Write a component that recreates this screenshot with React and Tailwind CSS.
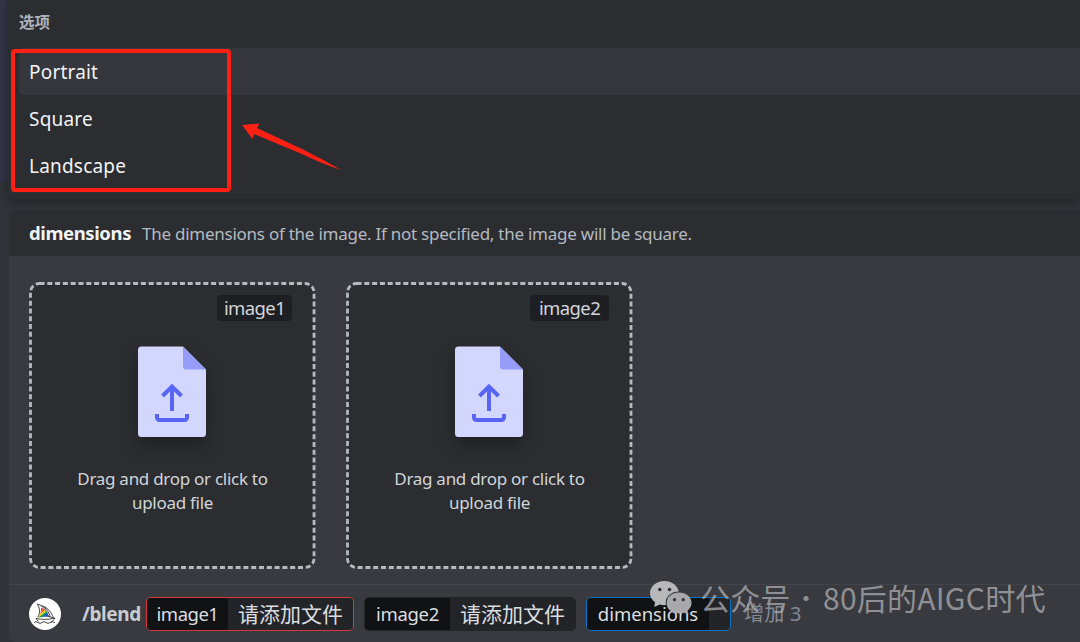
import { useId } from 'react';

const options = ['Portrait', 'Square', 'Landscape'];

const uploads = [
  { name: 'image1', width: 'w-[75px]' },
  { name: 'image2', width: 'w-[79px]' },
];

const FileIcon = () => (
  <svg width="68" height="91" viewBox="0 0 68 91" className="drop-shadow-[0_7px_8px_rgba(0,0,0,0.3)]">
    <path d="M3.500 0.5H45L68 23.500V87.500a3.500 3.500 0 0 1-3.500 3.500H3.500a3.500 3.500 0 0 1-3.500-3.500V4a3.500 3.500 0 0 1 3.500-3.500Z" fill="#d3d6fd" />
    <path d="M45 0.5L68 23.500H48a3 3 0 0 1-3-3Z" fill="#949cf7" />
    <path d="M34 65V41M24.500 50L34 40.500L43.500 50" fill="none" stroke="#5865f2" strokeWidth="4" />
    <path d="M19 68v3.500a2.500 2.500 0 0 0 2.500 2.500h25a2.500 2.500 0 0 0 2.500-2.500V68" fill="none" stroke="#5865f2" strokeWidth="4" />
  </svg>
);

const BoatIcon = () => {
  const clip = useId();
  return (
    <svg width="32" height="32" viewBox="0 0 32 32">
      <circle cx="16" cy="16" r="16" fill="#fff" />
      <clipPath id={clip}>
        <path d="M9 19.500C11.500 16 12.500 13.500 12 9.500C15.500 11 19 14 20 18.500C16 18.500 12.500 19 9 19.500Z" />
      </clipPath>
      <g fill="none" stroke="#333" strokeWidth="0.900">
        <path d="M8.300 6C13 7 17.500 12 18.800 18.200C15 17.300 11.500 18 8.800 19C11.500 15 11 10 8.300 6Z" />
        <path d="M12 7.500C18 9 22 13 24.500 20L19 18.300M15 8.800C18 12 20.500 15 21.200 19" />
        <path d="M7 20.500C12 21.500 20 22 26 20C24.500 22.500 23.500 23.500 22 24.200M7 20.500L9.500 23.500" />
        <path d="M5 24.500q2-1.800 4 0t4 0t4 0t4 0t5 0.200" />
      </g>
      <g clipPath={`url(#${clip})`} strokeWidth="2.200">
        <path d="M6 17L15.500 9" stroke="#e2283f" />
        <path d="M7 18.500L17 10" stroke="#f0602c" />
        <path d="M8 20L18 11.500" stroke="#f9d52b" />
        <path d="M9.500 21L19.500 12.800" stroke="#14a34b" />
        <path d="M11.500 21.500L20.500 14.200" stroke="#1c5fda" />
        <path d="M13.500 22.500L21.500 15.800" stroke="#5d38a8" />
      </g>
    </svg>
  );
};

const WeChatIcon = () => (
  <svg width="42" height="34" viewBox="0 0 42 34">
    <path d="M14.500 0C6.500 0 0 5.300 0 12.200C0 16 2 19 5.100 21.300L4.200 26L10 23.600C12 24.200 14 24.300 16 24.100C14.500 16.500 20 10.500 28.700 10.400C27.500 4.300 21.500 0 14.500 0Z" fill="#b8b8ba" />
    <path d="M29 11.500C22 11.500 16.500 16 16.500 22C16.500 28 22 32.500 29 32.500C30.800 32.500 32.500 32.200 34 31.600L38.500 33.500L37.500 29.700C40 27.800 41.500 25 41.500 22C41.500 16 36 11.500 29 11.500Z" fill="#a9a9ab" />
    <g fill="#303136">
      <circle cx="9.800" cy="8.500" r="1.800" />
      <circle cx="19.500" cy="8.500" r="1.800" />
      <circle cx="24.500" cy="18.700" r="1.600" />
      <circle cx="33.200" cy="18.700" r="1.600" />
    </g>
  </svg>
);

const UploadCard = ({ item }) => (
  <div className="relative flex h-[287px] w-[287px] flex-col items-center">
    <svg className="absolute inset-0" width="287" height="287">
      <rect x="1.500" y="1.500" width="283.500" height="284" rx="9" fill="#2b2d31" stroke="#b5bac1" strokeWidth="2.800" strokeDasharray="5 2.800" />
    </svg>
    <div className={`relative mt-[13px] mr-6 flex h-[26px] items-center justify-center self-end rounded bg-[#1e1f22] text-[18.500px] tracking-[-0.600px] text-[#d2d5da] ${item.width}`}>
      {item.name}
    </div>
    <div className="relative mt-[25px] mr-px">
      <FileIcon />
    </div>
    <p className="relative mt-[30px] text-center text-[17px] leading-6 tracking-[-0.280px] text-[#d2d5da]">
      Drag and drop or click to
      <br />
      upload file
    </p>
  </div>
);

const Argument = ({ name, value, frame, nameWidth }) => (
  <div className={`flex h-[34px] shrink-0 overflow-hidden rounded-[5px] border text-[18.500px] text-[#dbdee1] ${frame}`}>
    <span className={`flex items-center justify-center bg-[#111214] ${nameWidth}`}>{name}</span>
    <span className="flex flex-1 items-center justify-center bg-[#232428] text-[21px] leading-none tracking-normal">{value}</span>
  </div>
);

const App = () => {
  return (
    <div className="relative flex h-[642px] w-[1080px] flex-col overflow-hidden bg-[#313338] bg-linear-to-b from-[#33354a] from-[181px] to-[#313338] to-[181px] pl-[7px] font-['Noto_Sans','Noto_Sans_CJK_SC',sans-serif]">
      {/* Choices popup */}
      <div className="relative z-10 h-[199px] shrink-0 rounded-bl-lg bg-[#2b2d31] pl-3 shadow-[0_3px_12px_rgba(0,0,0,0.35)]">
        <div className="flex h-12 items-center pb-0.5 text-[15.500px] font-bold text-[#aeb3bb]">选项</div>
        {options.map((option, index) => (
          <div
            key={option}
            className={`flex h-[47px] items-center rounded-l pl-[10px] pt-0.5 text-[19px] tracking-[0.200px] text-[#f2f3f5] ${index === 0 ? 'bg-[#35373c]' : ''}`}
          >
            {option}
          </div>
        ))}
      </div>

      {/* Command panel */}
      <div className="ml-0.5 mt-[11px] flex h-[432px] flex-col overflow-hidden rounded-l-lg bg-[#383a40]">
        <div className="flex h-[46px] items-center bg-[#2b2d31] pl-5 pt-px">
          <span className="w-[113px] pb-0.5 text-[18.500px] font-bold tracking-[-0.400px] text-[#f2f3f5]">dimensions</span>
          <span className="pt-px text-[17px] tracking-[-0.250px] text-[#b5bac1]">
            The dimensions of the image. If not specified, the image will be square.
          </span>
        </div>
        <div className="flex h-[329px] gap-[30px] border-b border-[#42454c] pl-5 pt-[26px]">
          {uploads.map((item) => (
            <UploadCard key={item.name} item={item} />
          ))}
        </div>
        <div className="flex h-[57px] items-center pl-5 pt-px">
          <BoatIcon />
          <span className="ml-[21px] w-[64px] whitespace-nowrap pt-px text-[19px] font-bold tracking-[-0.400px] text-[#c8cbd0]">/blend</span>
          <Argument name="image1" value="请添加文件" frame="w-[208px] border-[#da373c] tracking-[-0.500px]" nameWidth="w-[81px]" />
          <Argument name="image2" value="请添加文件" frame="ml-[10px] w-[212px] border-[#232428] tracking-[-0.300px]" nameWidth="w-[85px]" />
          <Argument name="dimensions" value="" frame="ml-[10px] w-[145px] border-[#0873c9]" nameWidth="w-[122px]" />
          <span className="ml-[13px] text-[20px] tracking-[0.300px] text-[#858a94]">增加 3</span>
        </div>
      </div>

      {/* Account watermark */}
      <div className="absolute left-[650px] top-[581px] z-20 flex">
        <WeChatIcon />
        <div className="-mt-0.5 ml-2 flex whitespace-nowrap font-['Noto_Sans_CJK_SC',sans-serif] text-[30px] leading-9 text-[#a9a9ac]/80">
          <span className="w-[94px] tracking-[0.300px]">公众号</span>
          <span className="w-[29px] text-[24px]">·</span>
          <span className="tracking-[0.250px]">80后的AIGC时代</span>
        </div>
      </div>

      {/* Red callout */}
      <div className="absolute left-[11px] top-[49px] z-20 h-[143px] w-[220px] rounded border-4 border-[#ff2014]" />
      <svg className="absolute left-[240px] top-[120px] z-20" width="104" height="52">
        <path d="M2 5L19.500 3.500L17 8L64 30Q84 40 101 50Q80 43 62 34L14 14L12.500 19Z" fill="#ff2014" />
      </svg>
    </div>
  );
};

export default App;
